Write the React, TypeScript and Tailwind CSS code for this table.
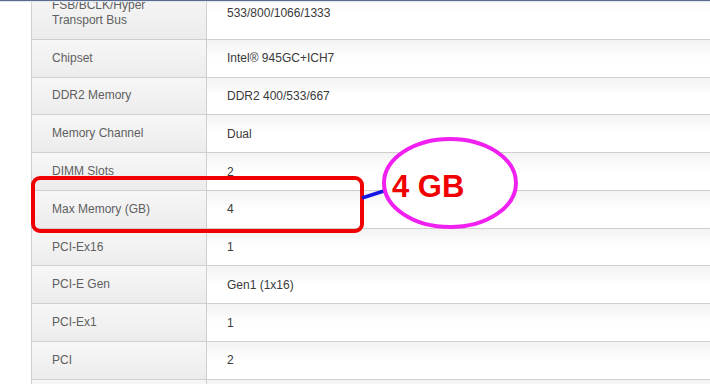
import React from "react";

const ROWS: { label: string[]; value: string }[] = [
  { label: ["FSB/BCLK/Hyper", "Transport Bus"], value: "533/800/1066/1333" },
  { label: ["Chipset"], value: "Intel® 945GC+ICH7" },
  { label: ["DDR2 Memory"], value: "DDR2 400/533/667" },
  { label: ["Memory Channel"], value: "Dual" },
  { label: ["DIMM Slots"], value: "2" },
  { label: ["Max Memory (GB)"], value: "4" },
  { label: ["PCI-Ex16"], value: "1" },
  { label: ["PCI-E Gen"], value: "Gen1 (1x16)" },
  { label: ["PCI-Ex1"], value: "1" },
  { label: ["PCI"], value: "2" },
  { label: [""], value: "" },
];

function SpecRow({ label, value }: { label: string[]; value: string }) {
  return (
    <div className="flex border-b border-[#cfcfcf]">
      <div className="w-[175px] shrink-0 border-r border-[#cfcfcf] bg-gradient-to-b from-[#f7f7f7] to-[#ececec] px-5 py-[10.9px] text-[#5f5f5f]">
        {label.map((line, i) => (
          <div key={i} className="h-[15px] leading-[15px]">
            {line}
          </div>
        ))}
      </div>
      <div className="flex flex-1 items-center bg-gradient-to-b from-[#f3f3f3] via-white to-white px-5 text-[#3a3a3a]">
        {value}
      </div>
    </div>
  );
}

export default function App() {
  return (
    <div className="relative h-[384px] w-[710px] overflow-hidden bg-white font-['Liberation_Sans',Arial,sans-serif] text-[12px]">
      {/* window frame edge */}
      <div className="h-px bg-[#5b6b8c]" />
      <div className="h-px bg-[#dfe6f2]" />

      <div className="h-[382px] overflow-hidden">
        <div className="-mt-[15px] ml-[31px] w-[800px] border-l border-[#cfcfcf]">
          {ROWS.map((row, i) => (
            <SpecRow key={i} label={row.label} value={row.value} />
          ))}
        </div>
      </div>

      {/* markup over the table */}
      <div className="absolute left-[31px] top-[176px] h-[57px] w-[333px] rounded-[9px] border-4 border-[#f00000]" />
      <svg className="absolute left-0 top-0" width="710" height="384">
        <line x1="362" y1="198" x2="387" y2="190" stroke="#1515e6" strokeWidth="3.5" />
        <ellipse cx="450" cy="183" rx="66" ry="44" fill="white" stroke="#f020f0" strokeWidth="4" />
      </svg>
      <div className="absolute left-[392px] top-[171px] text-[31px] font-bold leading-none text-[#f00000]">
        4 GB
      </div>
    </div>
  );
}
